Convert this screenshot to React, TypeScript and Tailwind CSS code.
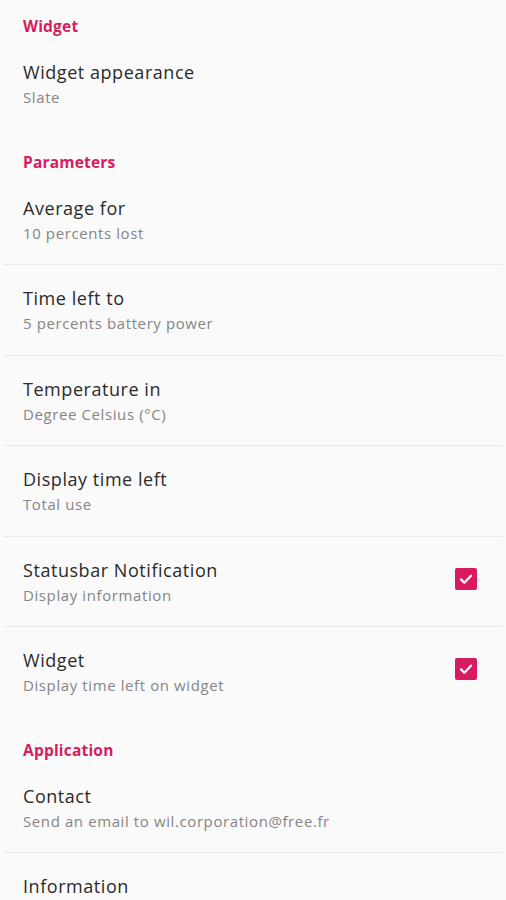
import React from 'react'

type Item = { title: string; subtitle: string; checked?: boolean; divider?: boolean }
type Section = { header: string; first?: boolean; items: Item[] }

const sections: Section[] = [
  {
    header: 'Widget',
    first: true,
    items: [{ title: 'Widget appearance', subtitle: 'Slate' }],
  },
  {
    header: 'Parameters',
    items: [
      { title: 'Average for', subtitle: '10 percents lost', divider: true },
      { title: 'Time left to', subtitle: '5 percents battery power', divider: true },
      { title: 'Temperature in', subtitle: 'Degree Celsius (°C)', divider: true },
      { title: 'Display time left', subtitle: 'Total use', divider: true },
      { title: 'Statusbar Notification', subtitle: 'Display information', checked: true, divider: true },
      { title: 'Widget', subtitle: 'Display time left on widget', checked: true },
    ],
  },
  {
    header: 'Application',
    items: [
      { title: 'Contact', subtitle: 'Send an email to wil.corporation@free.fr', divider: true },
      { title: 'Information', subtitle: 'Version 4.2' },
    ],
  },
]

function CheckBox() {
  return (
    <div className="flex h-[22px] w-[22px] items-center justify-center rounded-[2px] bg-[#d81b60]">
      <svg width="16" height="16" viewBox="0 0 24 24" fill="none">
        <path d="M4.5 12.5l5 5L19.5 7" stroke="white" strokeWidth="3.4" strokeLinecap="round" strokeLinejoin="round" />
      </svg>
    </div>
  )
}

function Row({ item }: { item: Item }) {
  return (
    <>
      <div className="flex h-[89.5px] items-start pl-[23px] pr-[29px] pt-[21px]">
        <div className="flex-1">
          <div className="text-[18px] leading-[24px] tracking-[0.55px] text-[#2a2a2a]">{item.title}</div>
          <div className="mt-[2px] text-[15px] leading-[22px] tracking-[0.6px] text-[#858585]">{item.subtitle}</div>
        </div>
        {item.checked && (
          <div className="mt-[10px]">
            <CheckBox />
          </div>
        )}
      </div>
      {item.divider && <div className="mx-[4px] h-px bg-[#e8e8e8]" />}
    </>
  )
}

export default function App() {
  return (
    <div className="h-[900px] overflow-hidden bg-[#fafafa]" style={{ fontFamily: '"Open Sans", sans-serif' }}>
      {sections.map((s) => (
        <div key={s.header}>
          <div
            className={`pl-[23px] pb-[3px] text-[15.5px] font-bold leading-[20px] tracking-[0.2px] text-[#d81b60] ${
              s.first ? 'pt-[16px]' : 'pt-[23px]'
            }`}
          >
            {s.header}
          </div>
          {s.items.map((it) => (
            <Row key={it.title} item={it} />
          ))}
        </div>
      ))}
    </div>
  )
}
